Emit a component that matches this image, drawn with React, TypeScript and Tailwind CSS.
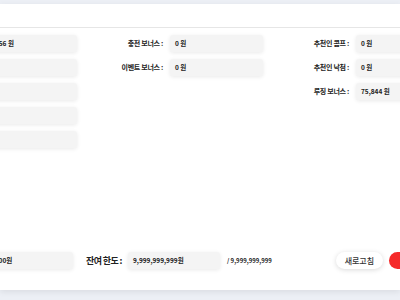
const font = { fontFamily: '"Noto Sans CJK KR", "Noto Sans", sans-serif' }

type Field = { label: string; value: string }

const columns: Field[][] = [
  [
    { label: '', value: '1,456 원' },
    { label: '', value: '' },
    { label: '', value: '' },
    { label: '', value: '' },
    { label: '', value: '' },
  ],
  [
    { label: '충전 보너스 :', value: '0 원' },
    { label: '이벤트 보너스 :', value: '0 원' },
  ],
  [
    { label: '추천인 콤프 :', value: '0 원' },
    { label: '추천인 낙첨 :', value: '0 원' },
    { label: '루징 보너스 :', value: '75,844 원' },
  ],
]

function ValueBox({ value, className = 'w-[93px]' }: { value: string; className?: string }) {
  return (
    <div
      className={`${className} shrink-0 h-[17px] flex items-center px-[5px] rounded-[3px] bg-[#f4f4f4] shadow-[0_1px_4px_rgba(0,0,0,0.09)] text-[6.5px] font-bold text-[#222] whitespace-nowrap`}
    >
      {value}
    </div>
  )
}

export default function App() {
  return (
    <div className="w-[400px] h-[300px] overflow-hidden bg-[#eceff5] pt-[4px]" style={font}>
      <div className="h-[286px] bg-white shadow-[0_2px_6px_rgba(0,0,0,0.08)] flex flex-col">
        <div className="h-[24px] border-b border-[#e6e6e6] shrink-0" />

        <div className="ml-[-102px] pt-[7px] flex">
          {columns.map((col, ci) => (
            <div key={ci} className="w-[186px] shrink-0 flex flex-col gap-[7px]">
              {col.map((f, i) => (
                <div key={i} className="flex items-center">
                  <span className="w-[86px] shrink-0 pr-[7px] text-right text-[7px] font-bold text-[#222] tracking-[-0.3px] whitespace-nowrap">
                    {f.label}
                  </span>
                  <ValueBox value={f.value} />
                </div>
              ))}
            </div>
          ))}
        </div>

        <div className="mt-auto pb-[21px] ml-[-20px] flex items-center">
          <ValueBox value="10,000원" />
          <span className="ml-[13px] shrink-0 text-[9px] font-bold text-[#222] tracking-[-0.6px] whitespace-nowrap">
            잔여 한도 :
          </span>
          <ValueBox value="9,999,999,999원" className="ml-[6px] w-[92px] font-semibold" />
          <span className="ml-[7px] shrink-0 text-[6px] font-bold text-[#222] whitespace-nowrap">/ 9,999,999,999</span>
          <button className="ml-[64px] shrink-0 h-[17px] w-[47px] rounded-full bg-white shadow-[0_1px_5px_rgba(0,0,0,0.15)] text-[8px] font-medium text-[#333]">
            새로고침
          </button>
          <button className="ml-[6px] h-[17px] w-[47px] shrink-0 rounded-full bg-[#f52a2a] text-[8px] font-medium text-white">
            적용
          </button>
        </div>
      </div>
    </div>
  )
}
